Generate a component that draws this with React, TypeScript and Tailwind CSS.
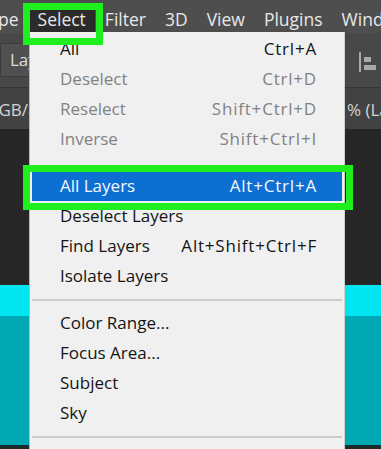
const font = { fontFamily: '"Open Sans", "Noto Sans", sans-serif' };

type Item =
  | { kind: "item"; label: string; shortcut?: string; disabled?: boolean; active?: boolean }
  | { kind: "sep"; low?: boolean };

const items: Item[] = [
  { kind: "item", label: "All", shortcut: "Ctrl+A" },
  { kind: "item", label: "Deselect", shortcut: "Ctrl+D", disabled: true },
  { kind: "item", label: "Reselect", shortcut: "Shift+Ctrl+D", disabled: true },
  { kind: "item", label: "Inverse", shortcut: "Shift+Ctrl+I", disabled: true },
  { kind: "sep", low: true },
  { kind: "item", label: "All Layers", shortcut: "Alt+Ctrl+A", active: true },
  { kind: "item", label: "Deselect Layers" },
  { kind: "item", label: "Find Layers", shortcut: "Alt+Shift+Ctrl+F" },
  { kind: "item", label: "Isolate Layers" },
  { kind: "sep" },
  { kind: "item", label: "Color Range..." },
  { kind: "item", label: "Focus Area..." },
  { kind: "item", label: "Subject" },
  { kind: "item", label: "Sky" },
  { kind: "sep" },
];

const menus = ["pe", "Select", "Filter", "3D", "View", "Plugins", "Window"];

export default function App() {
  return (
    <div className="relative w-[381px] h-[449px] overflow-hidden bg-[#262626]" style={font}>
      {/* menubar */}
      <div className="h-[33px] bg-[#4e4e4e] flex items-end overflow-hidden">
        <div className="flex ml-[-11.5px] whitespace-nowrap">
          {menus.map((m) => (
            <div
              key={m}
              className={`h-[28px] px-[9.5px] flex items-center text-[17.5px] text-[#e8e8e8] ${
                m === "Select" ? "bg-[#2b2b2b]" : ""
              }`}
            >
              {m}
            </div>
          ))}
        </div>
      </div>

      {/* options bar */}
      <div className="h-[55px] bg-[#484848] border-b border-[#363636] flex items-center">
        <div className="h-[34px] w-[60px] bg-[#505050] border border-[#3c3c3c] flex items-center pl-[9px] text-[17px] text-[#dedede]">
          Layer
        </div>
        <svg className="ml-auto mr-[4px] mt-[3px]" width="18" height="20" viewBox="0 0 18 20">
          <rect x="0" y="0" width="2" height="20" fill="#a8a8a8" />
          <rect x="5" y="5" width="7" height="5" fill="#a8a8a8" />
          <rect x="5" y="13" width="12" height="5" fill="#a8a8a8" />
        </svg>
      </div>

      {/* document tab */}
      <div className="h-[41px] bg-[#424242] flex items-center whitespace-nowrap text-[17px] text-[#d4d4d4] pt-[3px]">
        <span className="ml-[-12px] w-[359px] shrink-0">RGB/8)</span>
        <span>% (Layer 1, RGB/8)</span>
      </div>

      {/* canvas */}
      <div className="h-[156px] bg-[#262626]" />
      <div className="h-[31px] bg-[#00e5ef]" />
      <div className="h-[129px] bg-[#00a8b3]" />
      <div className="h-[3px] bg-[#1b2b2c]" />

      {/* dropdown menu */}
      <div className="absolute left-[29px] top-[32px] w-[316px] h-[430px] bg-[#f0f0f0] border-l border-r border-l-[#b9b9b9] border-r-[#cfcfcf] pt-[2px]">
        {items.map((it, i) =>
          it.kind === "sep" ? (
            <div
              key={i}
              className={`h-[17px] mx-[2px] flex ${it.low ? "items-end pb-[3px]" : "items-center"}`}
            >
              <div className="h-[2px] w-full bg-[#cbcbcb]" />
            </div>
          ) : (
            <div
              key={i}
              className={`h-[30px] mx-[2px] pl-[28px] pr-[25px] flex items-center justify-between text-[17px] whitespace-nowrap ${
                it.active
                  ? "bg-[#0c6fd1] text-[#f4f8ff]"
                  : it.disabled
                  ? "text-[#828282]"
                  : "text-[#141414]"
              }`}
            >
              <span>{it.label}</span>
              {it.shortcut && <span className="tracking-[0.8px]">{it.shortcut}</span>}
            </div>
          )
        )}
      </div>

      {/* highlight boxes */}
      <div className="absolute left-[23px] top-[3px] w-[80px] h-[42px] border-[7px] border-[#1fef1f]" />
      <div className="absolute left-[23px] top-[165px] w-[330px] h-[45px] border-[7px] border-[#1fef1f]" />
    </div>
  );
}
